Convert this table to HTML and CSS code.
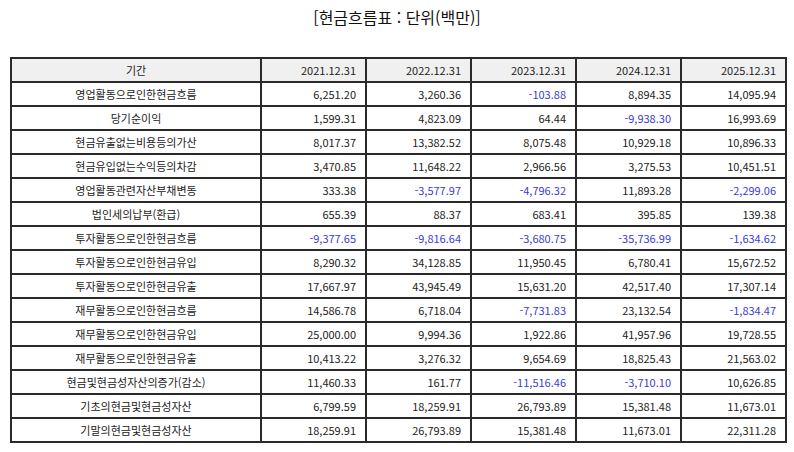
FILE: index.html
```html
<!DOCTYPE html>
<html lang="ko">
<head>
<meta charset="utf-8">
<link rel="stylesheet" href="styles.css">
</head>
<body>
<div class="page">
  <h1 class="title">[현금흐름표 : 단위(백만)]</h1>
  <table class="cf">
    <colgroup>
      <col class="c-name"><col class="c-val"><col class="c-val"><col class="c-val"><col class="c-val"><col class="c-val">
    </colgroup>
    <thead>
      <tr><th class="name">기간</th><th>2021.12.31</th><th>2022.12.31</th><th>2023.12.31</th><th>2024.12.31</th><th>2025.12.31</th></tr>
    </thead>
    <tbody>
      <tr><td class="name">영업활동으로인한현금흐름</td><td>6,251.20</td><td>3,260.36</td><td class="neg">-103.88</td><td>8,894.35</td><td>14,095.94</td></tr>
      <tr><td class="name">당기순이익</td><td>1,599.31</td><td>4,823.09</td><td>64.44</td><td class="neg">-9,938.30</td><td>16,993.69</td></tr>
      <tr><td class="name">현금유출없는비용등의가산</td><td>8,017.37</td><td>13,382.52</td><td>8,075.48</td><td>10,929.18</td><td>10,896.33</td></tr>
      <tr><td class="name">현금유입없는수익등의차감</td><td>3,470.85</td><td>11,648.22</td><td>2,966.56</td><td>3,275.53</td><td>10,451.51</td></tr>
      <tr><td class="name">영업활동관련자산부채변동</td><td>333.38</td><td class="neg">-3,577.97</td><td class="neg">-4,796.32</td><td>11,893.28</td><td class="neg">-2,299.06</td></tr>
      <tr><td class="name">법인세의납부(환급)</td><td>655.39</td><td>88.37</td><td>683.41</td><td>395.85</td><td>139.38</td></tr>
      <tr><td class="name">투자활동으로인한현금흐름</td><td class="neg">-9,377.65</td><td class="neg">-9,816.64</td><td class="neg">-3,680.75</td><td class="neg">-35,736.99</td><td class="neg">-1,634.62</td></tr>
      <tr><td class="name">투자활동으로인한현금유입</td><td>8,290.32</td><td>34,128.85</td><td>11,950.45</td><td>6,780.41</td><td>15,672.52</td></tr>
      <tr><td class="name">투자활동으로인한현금유출</td><td>17,667.97</td><td>43,945.49</td><td>15,631.20</td><td>42,517.40</td><td>17,307.14</td></tr>
      <tr><td class="name">재무활동으로인한현금흐름</td><td>14,586.78</td><td>6,718.04</td><td class="neg">-7,731.83</td><td>23,132.54</td><td class="neg">-1,834.47</td></tr>
      <tr><td class="name">재무활동으로인한현금유입</td><td>25,000.00</td><td>9,994.36</td><td>1,922.86</td><td>41,957.96</td><td>19,728.55</td></tr>
      <tr><td class="name">재무활동으로인한현금유출</td><td>10,413.22</td><td>3,276.32</td><td>9,654.69</td><td>18,825.43</td><td>21,563.02</td></tr>
      <tr><td class="name">현금및현금성자산의증가(감소)</td><td>11,460.33</td><td>161.77</td><td class="neg">-11,516.46</td><td class="neg">-3,710.10</td><td>10,626.85</td></tr>
      <tr><td class="name">기초의현금및현금성자산</td><td>6,799.59</td><td>18,259.91</td><td>26,793.89</td><td>15,381.48</td><td>11,673.01</td></tr>
      <tr><td class="name">기말의현금및현금성자산</td><td>18,259.91</td><td>26,793.89</td><td>15,381.48</td><td>11,673.01</td><td>22,311.28</td></tr>
    </tbody>
  </table>
</div>
</body>
</html>
```

FILE: styles.css
```css
html, body {
  margin: 0;
  padding: 0;
  background: #ffffff;
}
.page {
  padding: 6px 10px 0 10px;
  font-family: "Noto Sans CJK KR", "Noto Sans", sans-serif;
  color: #222222;
}
.title {
  margin: 0 0 29px 0;
  text-align: center;
  font-size: 16px;
  font-weight: normal;
  line-height: 22px;
  color: #111111;
}
.cf {
  border-collapse: collapse;
  table-layout: fixed;
  width: 775px;
  font-size: 11px;
}
.c-name { width: 250px; }
.c-val { width: 105px; }
.cf th, .cf td {
  border: 2px solid #2a2a2a;
  height: 24px;
  padding: 0 9px;
  box-sizing: border-box;
  text-align: right;
  font-weight: normal;
  line-height: 14px;
  white-space: nowrap;
}
.cf thead th {
  background: #f0f0f0;
}
.cf .name {
  text-align: center;
}
.cf .neg {
  color: #3b3bd6;
}
```
